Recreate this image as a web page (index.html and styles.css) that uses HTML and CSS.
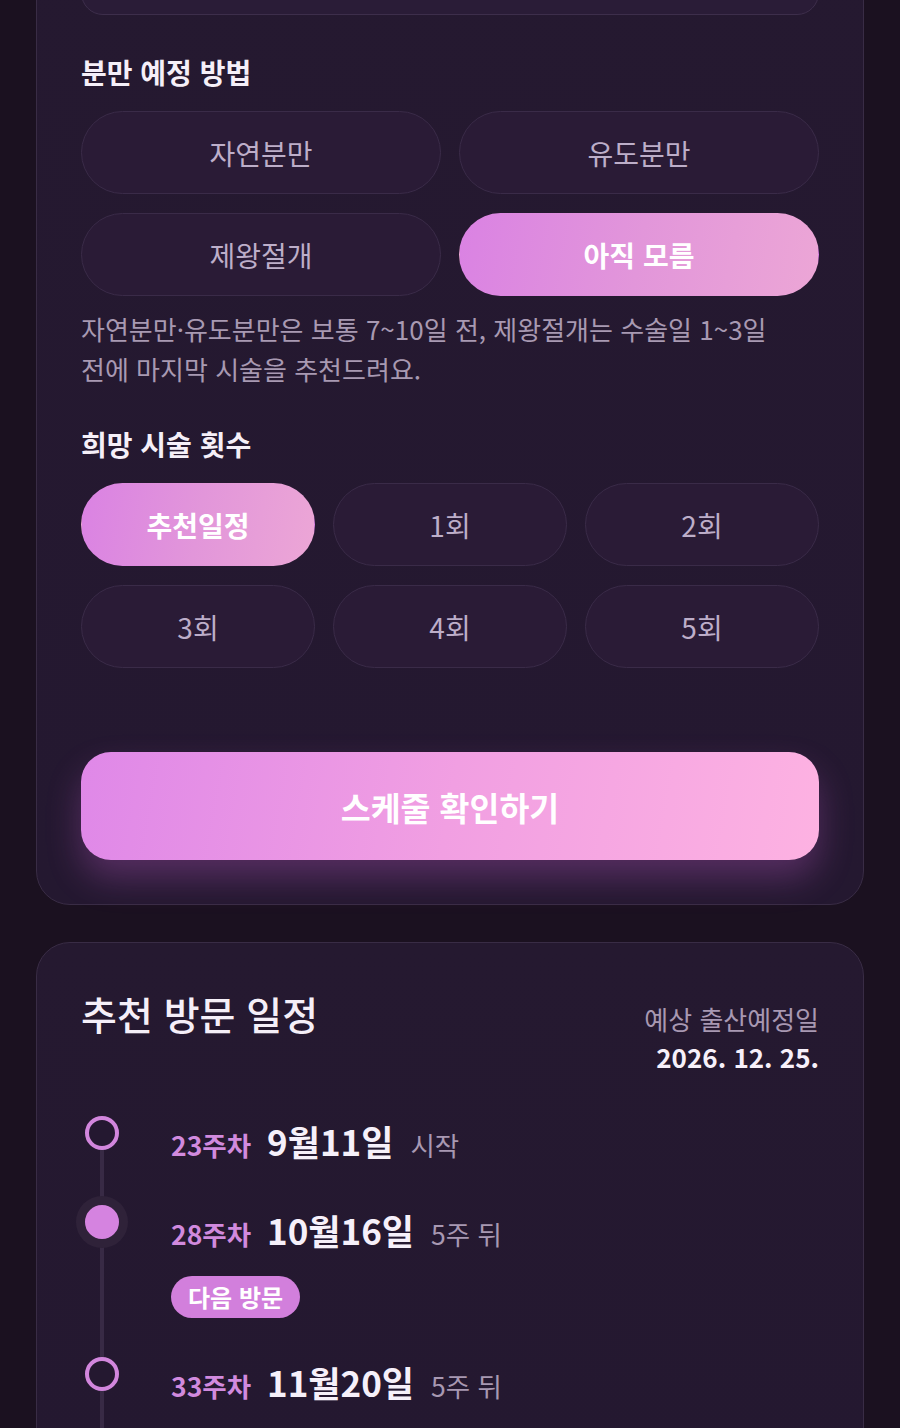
FILE: index.html
```html
<!DOCTYPE html>
<html lang="ko">
<head>
<meta charset="utf-8">
<title>분만 예정 방법</title>
<link rel="stylesheet" href="styles.css">
</head>
<body>
<main class="page">
  <section class="card card-form">
    <div class="field"></div>

    <h3 class="label label-first">분만 예정 방법</h3>
    <div class="grid grid-2">
      <button class="pill">자연분만</button>
      <button class="pill">유도분만</button>
      <button class="pill">제왕절개</button>
      <button class="pill pill-on">아직 모름</button>
    </div>
    <p class="note">자연분만·유도분만은 보통 7~10일 전, 제왕절개는 수술일 1~3일 전에 마지막 시술을 추천드려요.</p>

    <h3 class="label label-second">희망 시술 횟수</h3>
    <div class="grid grid-3">
      <button class="pill pill-on">추천일정</button>
      <button class="pill">1회</button>
      <button class="pill">2회</button>
      <button class="pill">3회</button>
      <button class="pill">4회</button>
      <button class="pill">5회</button>
    </div>

    <button class="cta">스케줄 확인하기</button>
  </section>

  <section class="card card-plan">
    <header class="plan-head">
      <h2 class="plan-title">추천 방문 일정</h2>
      <div class="due">
        <div class="due-label">예상 출산예정일</div>
        <div class="due-date">2026. 12. 25.</div>
      </div>
    </header>

    <ol class="timeline">
      <li class="item">
        <span class="dot"></span>
        <div class="item-body">
          <div class="item-line">
            <span class="week">23주차</span>
            <span class="date">9월11일</span>
            <span class="rel">시작</span>
          </div>
        </div>
      </li>
      <li class="item item-current">
        <span class="dot dot-fill"></span>
        <div class="item-body">
          <div class="item-line">
            <span class="week">28주차</span>
            <span class="date">10월16일</span>
            <span class="rel">5주 뒤</span>
          </div>
          <div class="tag-row"><span class="tag">다음 방문</span></div>
        </div>
      </li>
      <li class="item">
        <span class="dot"></span>
        <div class="item-body">
          <div class="item-line">
            <span class="week">33주차</span>
            <span class="date">11월20일</span>
            <span class="rel">5주 뒤</span>
          </div>
        </div>
      </li>
    </ol>
  </section>
</main>
</body>
</html>
```

FILE: styles.css
```css
* { box-sizing: border-box; }

html, body {
  margin: 0;
  padding: 0;
}

body {
  background: #1b1120;
  font-family: "Noto Sans CJK KR", "Noto Sans", sans-serif;
  color: #f3edf7;
  height: 1428px;
  overflow: hidden;
}

.page {
  padding: 0 36px;
  display: flex;
  flex-direction: column;
  gap: 37px;
}

.card {
  background: linear-gradient(180deg, #251930 0%, #241830 100%);
  border: 1px solid #392c45;
  border-radius: 34px;
  padding: 0 44px;
}

.card-form {
  margin-top: -90px;
  padding-top: 43px;
  padding-bottom: 44px;
}

.field {
  height: 61px;
  border-radius: 22px;
  background: #2a1c37;
  border: 1px solid #3d2e4b;
}

.label {
  margin: 0;
  font-size: 28px;
  font-weight: 700;
  line-height: 36px;
  color: #f5eff8;
}

.label-first { margin-top: 39px; }
.label-second { margin-top: 37px; }

.grid {
  display: grid;
  margin-top: 21px;
  column-gap: 18px;
  row-gap: 19px;
}

.grid-2 { grid-template-columns: 1fr 1fr; }
.grid-3 { grid-template-columns: 1fr 1fr 1fr; }

.pill {
  height: 83px;
  border-radius: 42px;
  background: #2a1b36;
  border: 1px solid #3a2b48;
  color: #bdaec9;
  font-family: inherit;
  font-size: 28px;
  font-weight: 400;
  padding: 0;
  cursor: pointer;
}

.pill-on {
  background: linear-gradient(100deg, #da82e3 0%, #e296da 50%, #eca6d6 100%);
  border-color: transparent;
  color: #ffffff;
  font-weight: 700;
}

.note {
  margin: 13px 0 0;
  max-width: 705px;
  font-size: 26px;
  line-height: 40px;
  color: #a899b2;
}

.cta {
  display: block;
  width: 100%;
  margin-top: 84px;
  height: 108px;
  border: none;
  border-radius: 30px;
  background: linear-gradient(100deg, #df88e8 0%, #f19fe2 50%, #fdb2e2 100%);
  color: #ffffff;
  font-family: inherit;
  font-size: 32.5px;
  font-weight: 700;
  box-shadow: 0 18px 34px rgba(190, 90, 200, 0.32);
  cursor: pointer;
}

.card-plan {
  padding-top: 43px;
  padding-bottom: 60px;
}

.plan-head {
  display: flex;
  justify-content: space-between;
  align-items: flex-start;
}

.plan-title {
  margin: 0;
  font-size: 39px;
  font-weight: 500;
  line-height: 54px;
  color: #f5eff8;
}

.due {
  margin-top: 14px;
  text-align: right;
}

.due-label {
  font-size: 26px;
  line-height: 38px;
  color: #a898b2;
}

.due-date {
  font-size: 26px;
  line-height: 38px;
  font-weight: 700;
  color: #f7f0fa;
}

.timeline {
  list-style: none;
  margin: 40px 0 0;
  padding: 0;
  position: relative;
  display: flex;
  flex-direction: column;
  gap: 39px;
}

.timeline::before {
  content: "";
  position: absolute;
  left: 19px;
  top: 20px;
  bottom: -80px;
  width: 4px;
  background: #382a45;
  border-radius: 2px;
}

.item {
  display: flex;
  align-items: flex-start;
  gap: 52px;
  position: relative;
}

.dot {
  flex: none;
  width: 34px;
  height: 34px;
  margin-left: 4px;
  border-radius: 50%;
  border: 4px solid #d286dd;
  background: #241830;
  position: relative;
}

.dot-fill {
  background: #d583e0;
  border-color: #d583e0;
  box-shadow: 0 0 0 9px #2f2239;
}

.item-line {
  display: flex;
  align-items: baseline;
  height: 50px;
  line-height: 50px;
}

.week {
  font-size: 26.5px;
  font-weight: 700;
  color: #d18ade;
}

.date {
  margin-left: 16px;
  font-size: 35px;
  font-weight: 700;
  color: #f6f0fa;
}

.rel {
  margin-left: 17px;
  font-size: 26.5px;
  color: #a898b2;
}

.tag-row {
  display: flex;
  margin-top: 21px;
}

.tag {
  height: 42px;
  line-height: 42px;
  padding: 0 17px;
  border-radius: 21px;
  background: #d27fdc;
  color: #ffffff;
  font-size: 24px;
  font-weight: 700;
}
```
